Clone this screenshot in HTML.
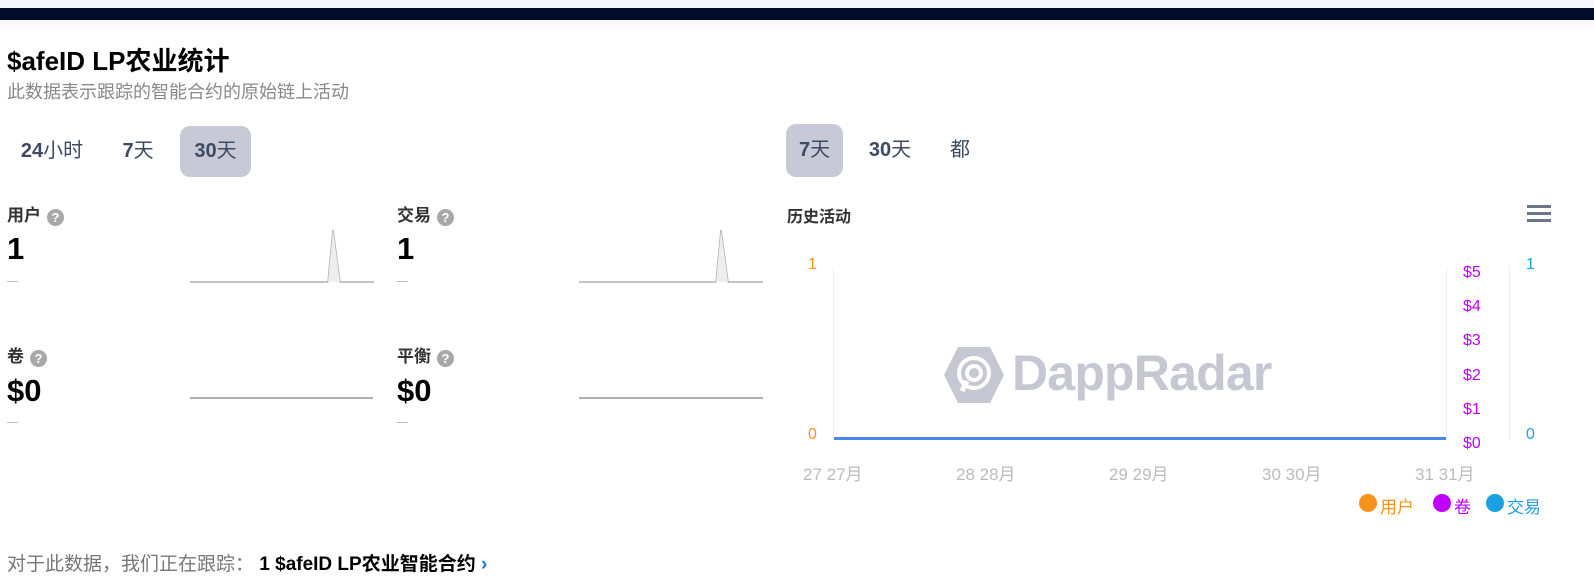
<!DOCTYPE html>
<html><head><meta charset="utf-8"><style>
*{margin:0;padding:0;box-sizing:border-box}
body{width:1594px;height:565px;overflow:hidden;background:#fff;font-family:"Liberation Sans","Noto Sans CJK SC",sans-serif;position:relative}
.a{position:absolute;white-space:nowrap}
.tab{position:absolute;height:51px;line-height:51px;font-size:20px;color:#3d4a63;border-radius:10px;text-align:center}
.tab b{font-weight:700}
.tab span{font-weight:400}
.lab{font-size:17px;font-weight:700;color:#333}
.q{display:inline-block;width:17px;height:17px;border-radius:50%;background:#a8a8a8;color:#fff;font-size:13px;line-height:17px;text-align:center;vertical-align:-1px;margin-left:6px;font-weight:700}
.val{font-size:31px;font-weight:700;color:#000}
.dash{position:absolute;width:11px;height:1px;background:#bbb}
.xl{font-size:17px;color:#bbb}
.ax{font-size:16px}
</style></head><body>
<div class="a" style="left:0;top:0;width:1594px;height:8px;background:#f5f6fc"></div>
<div class="a" style="left:0;top:8px;width:1594px;height:12px;background:#010c28"></div>
<div class="a" style="left:0;top:20px;width:1594px;height:14px;background:linear-gradient(#f6f7fb,#fff)"></div>

<div class="a" style="left:7px;top:41px;font-size:26px;font-weight:700;color:#000">$afeID LP农业统计</div>
<div class="a" style="left:7px;top:78px;font-size:18px;color:#888">此数据表示跟踪的智能合约的原始链上活动</div>

<div class="tab" style="left:8px;top:126px;width:88px"><b>24</b><span>小时</span></div>
<div class="tab" style="left:112px;top:126px;width:52px"><b>7</b><span>天</span></div>
<div class="tab" style="left:180px;top:126px;width:71px;background:#c8c9d6"><b>30</b><span>天</span></div>
<div class="tab" style="left:786px;top:124px;width:57px;height:53px;line-height:53px;background:#c8c9d6"><b>7</b><span>天</span></div>
<div class="tab" style="left:858px;top:124px;width:64px;height:53px;line-height:53px"><b>30</b><span>天</span></div>
<div class="tab" style="left:940px;top:124px;width:40px;height:53px;line-height:53px"><span>都</span></div>

<div class="a lab" style="left:7px;top:201px">用户<span class="q">?</span></div>
<div class="a lab" style="left:397px;top:201px">交易<span class="q">?</span></div>
<div class="a val" style="left:7px;top:231px">1</div>
<div class="a val" style="left:397px;top:231px">1</div>
<div class="dash" style="left:7px;top:281px"></div>
<div class="dash" style="left:397px;top:281px"></div>
<svg class="a" style="left:190px;top:225px" width="184" height="60"><path d="M0 57H138L143 5L150 57H184" fill="none" stroke="#b0b0b0" stroke-width="1.5"/><path d="M138 57L143 5L150 57Z" fill="#eee"/></svg>
<svg class="a" style="left:579px;top:225px" width="184" height="60"><path d="M0 57H137L142 5L149 57H184" fill="none" stroke="#b0b0b0" stroke-width="1.5"/><path d="M137 57L142 5L149 57Z" fill="#eee"/></svg>

<div class="a lab" style="left:7px;top:342px">卷<span class="q">?</span></div>
<div class="a lab" style="left:397px;top:342px">平衡<span class="q">?</span></div>
<div class="a val" style="left:7px;top:373px">$0</div>
<div class="a val" style="left:397px;top:373px">$0</div>
<div class="dash" style="left:7px;top:422px"></div>
<div class="dash" style="left:397px;top:422px"></div>
<div class="a" style="left:190px;top:397px;width:183px;height:2px;background:#b0b0b0"></div>
<div class="a" style="left:579px;top:397px;width:184px;height:2px;background:#b0b0b0"></div>

<div class="a" style="left:7px;top:549px;font-size:19px;color:#777">对于此数据，我们正在跟踪： <b style="color:#000">1 $afeID LP农业智能合约</b> <span style="color:#1a73e8;font-weight:700">›</span></div>

<!-- chart -->
<div class="a" style="left:787px;top:203px;font-size:16px;font-weight:700;color:#333">历史活动</div>
<div class="a" style="left:1527px;top:205px;width:24px;height:3px;background:#6b7587;box-shadow:0 7px 0 #6b7587,0 14px 0 #6b7587"></div>
<div class="a" style="left:833px;top:267px;width:1px;height:173px;background:#eee"></div>
<div class="a" style="left:1446px;top:267px;width:1px;height:173px;background:#eee"></div>
<div class="a" style="left:1509px;top:267px;width:1px;height:173px;background:#eee"></div>
<div class="a" style="left:834px;top:437px;width:612px;height:3px;background:#4a86e8"></div>

<div class="a ax" style="left:808px;top:256px;color:#f7931a">1</div>
<div class="a ax" style="left:808px;top:426px;color:#f7931a">0</div>
<div class="a ax" style="left:1463px;top:256px;color:#c000ff;line-height:34.2px">$5<br>$4<br>$3<br>$2<br>$1<br>$0</div>
<div class="a ax" style="left:1526px;top:256px;color:#1ba1e2">1</div>
<div class="a ax" style="left:1526px;top:426px;color:#1ba1e2">0</div>

<div class="a xl" style="left:803px;top:460px">27 27月</div>
<div class="a xl" style="left:956px;top:460px">28 28月</div>
<div class="a xl" style="left:1109px;top:460px">29 29月</div>
<div class="a xl" style="left:1262px;top:460px">30 30月</div>
<div class="a xl" style="left:1415px;top:460px">31 31月</div>

<svg class="a" style="left:943px;top:346px" width="62" height="58" viewBox="0 0 62 58"><path d="M15 1H47L61 29L47 57H15L1 29Z" fill="#c5c8d2"/><circle cx="31" cy="27" r="15" fill="none" stroke="#fff" stroke-width="4"/><circle cx="31" cy="27" r="7" fill="none" stroke="#fff" stroke-width="4"/><path d="M24 35L19 45" stroke="#fff" stroke-width="5"/></svg>
<div class="a" style="left:1012px;top:344px;font-size:50px;font-weight:700;color:#c5c8d2;letter-spacing:-0.8px">DappRadar</div>

<div class="a" style="left:1359px;top:494px;width:18px;height:18px;border-radius:50%;background:#f7931a"></div>
<div class="a" style="left:1380px;top:493px;font-size:17px;color:#f7931a">用户</div>
<div class="a" style="left:1433px;top:494px;width:18px;height:18px;border-radius:50%;background:#c000ff"></div>
<div class="a" style="left:1454px;top:493px;font-size:17px;color:#c000ff">卷</div>
<div class="a" style="left:1486px;top:494px;width:18px;height:18px;border-radius:50%;background:#1ba1e2"></div>
<div class="a" style="left:1507px;top:493px;font-size:17px;color:#1ba1e2">交易</div>
</body></html>
